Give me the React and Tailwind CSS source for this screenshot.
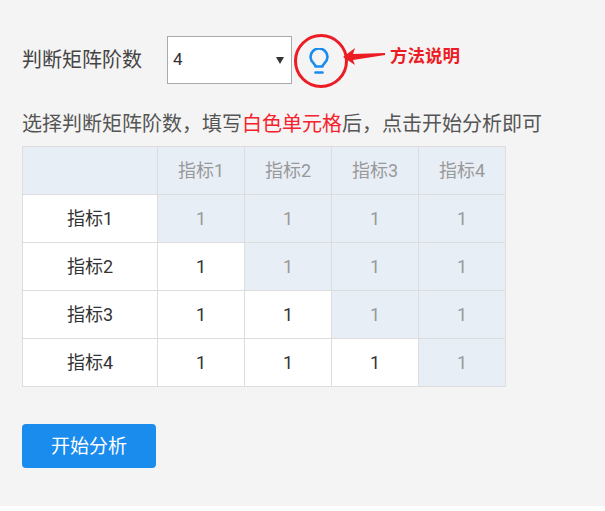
const FONT = "font-['Roboto','Noto_Sans_CJK_SC',sans-serif]";

const headers = ['指标1', '指标2', '指标3', '指标4'];

function Cell({ blue, children }) {
  return (
    <td className={`border border-[#dddddd] text-center p-0 ${blue ? 'bg-[#e8eef6] text-[#999999]' : 'bg-white text-[#333333]'}`}>
      {children}
    </td>
  );
}

function Bulb() {
  return (
    <svg width="20" height="26" viewBox="0 0 20 26" fill="none" stroke="#1a8cee" strokeWidth="2.6" strokeLinecap="round" strokeLinejoin="round">
      <path d="M6.5 18.5c0-2.5-5-4.5-5-9.5a8.5 8.5 0 0 1 17 0c0 5-5 7-5 9.5z" />
      <path d="M6.5 24.5h7" />
    </svg>
  );
}

export default function App() {
  return (
    <div className={`${FONT} w-full h-[506px] bg-[#f4f4f4] pt-[36px] pl-[22px] text-[#333333]`}>
      <div className="relative flex items-center h-[48px]">
        <span className="text-[20px] leading-[48px] w-[145px] text-[#444444]">判断矩阵阶数</span>
        <div className="w-[125px] h-[48px] bg-white border border-[#aaaaaa] flex items-center justify-between pl-[5px] pr-[7px] text-[17px] text-[#333333]">
          <span>4</span>
          <span className="w-0 h-0 border-l-[4px] border-r-[4px] border-t-[7px] border-l-transparent border-r-transparent border-t-[#333333]" />
        </div>
        <div className="ml-[17px] mt-[1px] flex">
          <Bulb />
        </div>
        <svg className="absolute left-[270px] top-[-4px]" width="100" height="58" viewBox="0 0 100 58" fill="none">
          <circle cx="29" cy="29" r="25.5" stroke="#ec1c24" strokeWidth="3" />
          <path d="M51 25 L63 16 L61 22 L93 21 L93 23 L61 28 L63 33 Z" fill="#ec1c24" />
        </svg>
        <span className="absolute left-[368px] top-[8px] text-[17.5px] leading-[24px] font-bold text-[#ec1c24]">方法说明</span>
      </div>

      <p className="text-[20px] leading-[28px] mt-[26px] text-[#555555]">
        选择判断矩阵阶数，填写<span className="text-[#f5222d]">白色单元格</span>后，点击开始分析即可
      </p>

      <table className="mt-[8px] border-collapse table-fixed w-[484px] text-[18px]">
        <colgroup>
          <col className="w-[135px]" />
          <col className="w-[87px]" />
          <col className="w-[87px]" />
          <col className="w-[87px]" />
          <col className="w-[87px]" />
        </colgroup>
        <tbody>
          <tr className="h-[48px]">
            <Cell blue />
            {headers.map((h) => (
              <Cell blue key={h}>{h}</Cell>
            ))}
          </tr>
          {headers.map((h, r) => (
            <tr className="h-[48px]" key={h}>
              <Cell>{h}</Cell>
              {headers.map((_, c) => (
                <Cell blue={c >= r} key={c}>1</Cell>
              ))}
            </tr>
          ))}
        </tbody>
      </table>

      <button className="mt-[37px] w-[134px] h-[44px] pt-[3px] rounded-[4px] bg-[#1a8cee] text-white text-[19px] flex items-center justify-center">
        开始分析
      </button>
    </div>
  );
}
